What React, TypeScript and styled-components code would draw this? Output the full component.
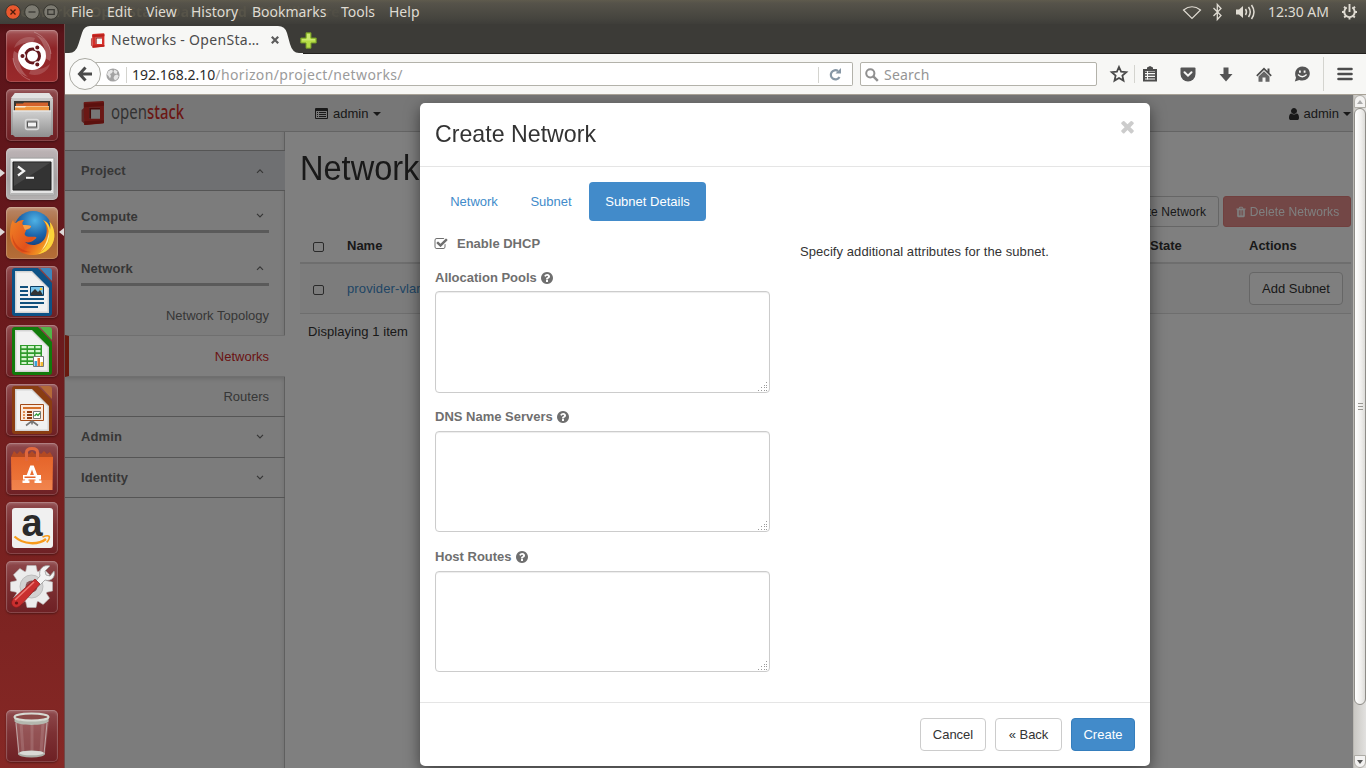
import React from "react";
import styled, { createGlobalStyle, css } from "styled-components";

const GlobalStyle = createGlobalStyle`
  * { box-sizing: border-box; }
  html, body { margin: 0; padding: 0; overflow: hidden; }
  body { font-family: "Liberation Sans", Arial, sans-serif; font-size: 13px; line-height: 18px; color: #333; }
  svg { display: block; flex: none; overflow: visible; }
`;

const uiFont = css`
  font-family: "Noto Sans", "Open Sans", sans-serif;
  font-size: 14px;
`;

/* ---------- Desktop shell ---------- */
const Desktop = styled.div`
  width: 1366px;
  height: 768px;
  display: flex;
  flex-direction: column;
  overflow: hidden;
`;
const MenuBar = styled.header`
  ${uiFont}
  position: relative;
  height: 24px;
  flex: none;
  display: flex;
  align-items: center;
  justify-content: space-between;
  padding: 0 8px 0 5px;
  color: #dfdbd2;
  background: linear-gradient(#5f5b4d 0, #56534a 3px, #45443e 19px, #3e3d39 24px);
`;
const WindowTitle = styled.span`
  position: absolute;
  left: 9px;
  top: 2px;
  font-weight: 700;
  font-size: 14px;
  line-height: 20px;
  letter-spacing: 0.1px;
  color: #575449;
  white-space: nowrap;
  mask-image: linear-gradient(90deg, #000 300px, transparent 345px);
`;
const MenuLeft = styled.div`
  position: relative;
  display: flex;
  align-items: center;
`;
const WindowButtons = styled.div`
  display: flex;
  gap: 3px;
  width: 66px;
`;
const MenuItem = styled.span<{ $w: number }>`
  width: ${(p) => p.$w}px;
  white-space: nowrap;
`;
const Indicators = styled.div`
  display: flex;
  align-items: center;
`;
const Clock = styled.span`
  margin: 0 12px 0 12px;
  white-space: nowrap;
`;
const Workspace = styled.div`
  flex: 1;
  display: flex;
  min-height: 0;
`;

/* ---------- Launcher ---------- */
const Launcher = styled.nav`
  width: 65px;
  flex: none;
  padding: 6px 0 6px 6px;
  display: flex;
  flex-direction: column;
  gap: 7px;
  border-right: 1px solid #6f4a49;
  background: linear-gradient(#4c0f13 0, #5b141a 10px, #66181c 230px, #76201f 480px, #862825 744px);
`;
const Tile = styled.div<{ $bg?: string; $last?: boolean }>`
  position: relative;
  width: 52px;
  height: 52px;
  flex: none;
  border-radius: 5px;
  margin-top: ${(p) => (p.$last ? "auto" : "0")};
  background: ${(p) => p.$bg ?? "linear-gradient(#8f4a4d, #7c3033 45%, #6e2024)"};
  box-shadow: inset 0 0 0 1px rgba(255, 255, 255, 0.17), inset 0 2px 3px rgba(255, 255, 255, 0.18), 0 1px 2px rgba(0, 0, 0, 0.35);
`;
const Pip = styled.i<{ $side: "left" | "right" }>`
  position: absolute;
  top: 21px;
  ${(p) =>
    p.$side === "left"
      ? "left: -6px; border-left: 5px solid #ded8d8;"
      : "right: -6px; border-right: 5px solid #ded8d8;"}
  border-top: 4.5px solid transparent;
  border-bottom: 4.5px solid transparent;
`;

/* ---------- Browser chrome ---------- */
const Browser = styled.section`
  flex: 1;
  display: flex;
  flex-direction: column;
  min-width: 0;
`;
const TabStrip = styled.div`
  height: 30px;
  flex: none;
  display: flex;
  align-items: flex-start;
  background: #3c3b37;
  border-bottom: 1px solid #23221f;
`;
const Tab = styled.div`
  ${uiFont}
  position: relative;
  width: 238px;
  height: 30px;
  padding: 2px 11px 0 25px;
  display: flex;
  align-items: center;
  color: #4c4c4c;
`;
const TabShape = styled.svg`
  position: absolute;
  left: 0;
  top: 0;
`;
const TabLabel = styled.span`
  position: relative;
  margin-left: 6px;
  width: 160px;
  letter-spacing: 0.3px;
  white-space: nowrap;
`;
const Above = styled.span`
  position: relative;
  display: block;
`;
const NewTab = styled.div`
  margin: 8px 0 0 -3px;
`;
const NavBar = styled.div`
  ${uiFont}
  height: 41px;
  flex: none;
  display: flex;
  align-items: center;
  padding: 0 13px 0 4px;
  background: #f7f7f5;
  border-bottom: 1px solid #a7a196;
`;
const BackButton = styled.div`
  position: relative;
  z-index: 1;
  width: 32px;
  height: 32px;
  flex: none;
  border: 1px solid #a9a9a2;
  border-radius: 50%;
  background: #fafaf9;
  display: flex;
  align-items: center;
  justify-content: center;
`;
const UrlField = styled.div`
  width: 758px;
  height: 24px;
  margin-left: -6px;
  padding: 1px 0 0 11px;
  display: flex;
  align-items: center;
  background: #fff;
  border: 1px solid #b3b2aa;
  border-left: 0;
  border-radius: 0 2px 2px 0;
  white-space: nowrap;
`;
const Divider = styled.i<{ $h: number }>`
  width: 1px;
  flex: none;
  height: ${(p) => p.$h}px;
  background: #d4d4cf;
`;
const Host = styled.span`
  margin-left: 5px;
  color: #2b2b2b;
`;
const UrlPath = styled.span`
  flex: 1;
  color: #9b9b9b;
  letter-spacing: 0.37px;
`;
const Reload = styled.div`
  width: 33px;
  display: flex;
  justify-content: center;
`;
const SearchField = styled.div`
  width: 237px;
  height: 24px;
  margin-left: 7px;
  padding: 1px 0 0 4px;
  display: flex;
  align-items: center;
  gap: 5px;
  color: #959595;
  background: #fff;
  border: 1px solid #b3b2aa;
  border-radius: 2px;
  letter-spacing: 0.2px;
`;
const ToolButtons = styled.div`
  flex: 1;
  display: flex;
  align-items: center;
  padding-left: 13px;
`;

/* ---------- Web page ---------- */
const PageFrame = styled.div`
  flex: 1;
  display: flex;
  min-height: 0;
`;
const Viewport = styled.div`
  position: relative;
  width: 1288px;
  overflow: hidden;
  background: #fff;
`;
const ScrollBar = styled.div`
  width: 13px;
  display: flex;
  flex-direction: column;
  background: linear-gradient(90deg, #c9c7c3, #e2e1df);
  border-left: 1px solid #b9b7b2;
`;
const ScrollEnd = styled.div<{ $down?: boolean }>`
  height: 13px;
  display: flex;
  align-items: center;
  justify-content: center;
  background: #f3f2f1;
  border: 1px solid #aeaca6;
  border-radius: ${(p) => (p.$down ? "0 0 6px 6px" : "6px 6px 0 0")};
`;
const Thumb = styled.div`
  height: 597px;
  margin-bottom: auto;
  display: flex;
  flex-direction: column;
  align-items: center;
  justify-content: center;
  gap: 2px;
  border: 1px solid #8e8c87;
  border-radius: 6px;
  background: linear-gradient(90deg, #fff, #f0efed 60%, #dddcd9);
`;
const Grip = styled.i`
  width: 5px;
  height: 1px;
  background: #9a9893;
`;
const TopBar = styled.div`
  height: 37px;
  display: flex;
  align-items: center;
  justify-content: space-between;
  padding: 0 2px 0 14px;
  background: #efefef;
  border-bottom: 1px solid #c8c8c8;
`;
const Brand = styled.div`
  display: flex;
  align-items: center;
  gap: 128px;
`;
const Picker = styled.div<{ $gap: number }>`
  display: flex;
  align-items: center;
  padding-top: 1px;
  gap: ${(p) => p.$gap}px;
`;
const Caret = styled.i`
  border: 4px solid transparent;
  border-top: 4px solid #333;
  border-bottom: 0;
`;
const PageBody = styled.div`
  display: flex;
  height: 636px;
`;
const Sidebar = styled.aside`
  width: 220px;
  flex: none;
  padding-top: 18px;
  background: #f9f9f9;
  background-image: linear-gradient(270deg, rgba(0, 0, 0, 0.07), transparent 5px);
  box-shadow: inset -1px 0 0 #bfbfbf;
`;
const PanelGroup = styled.div<{ $active?: boolean }>`
  height: 41px;
  padding: 0 21px 0 16px;
  display: flex;
  align-items: center;
  justify-content: space-between;
  font-weight: 700;
  color: #6e6e6e;
  letter-spacing: 0.1px;
  ${(p) =>
    p.$active
      ? "background: #dfe1e4; border-top: 1px solid #aaa; border-bottom: 1px solid #aaa;"
      : "border-bottom: 1px solid #aaa;"}
`;
const SubGroup = styled.div<{ $top: number; $pad: number }>`
  margin: ${(p) => p.$top}px 16px 0;
  padding: 0 5px ${(p) => p.$pad}px 0;
  display: flex;
  justify-content: space-between;
  align-items: center;
  border-bottom: 3px solid #b4b4b4;
  font-weight: 700;
  color: #6e6e6e;
  letter-spacing: 0.08px;
  svg { margin-top: -2px; }
`;
const SideLink = styled.div<{ $h: number; $active?: boolean }>`
  height: ${(p) => p.$h}px;
  padding-right: 16px;
  display: flex;
  align-items: center;
  justify-content: flex-end;
  color: #6e6e6e;
  ${(p) =>
    p.$active &&
    css`
      padding-top: 2px;
      color: #d42a2a;
      background: #fff;
      border-left: 4px solid #d3321f;
      border-top: 1px solid #dedede;
      border-bottom: 1px solid #dedede;
      box-shadow: 0 2px 5px -1px rgba(0, 0, 0, 0.2);
      clip-path: inset(0 0 -7px 0);
    `}
`;
const Main = styled.main`
  flex: 1;
  padding: 15px 2px 0 15px;
`;
const PageTitle = styled.h1`
  margin: 0;
  font-size: 35px;
  line-height: 42px;
  font-weight: 400;
  transform: scaleX(0.93);
  transform-origin: 0 0;
`;
const TableActions = styled.div`
  height: 31px;
  margin-top: 7px;
  display: flex;
  justify-content: flex-end;
  gap: 4px;
`;
const Button = styled.div<{ $kind?: "primary" | "danger"; $small?: boolean; $w?: number }>`
  height: ${(p) => (p.$small ? 31 : 33)}px;
  width: ${(p) => (p.$w ? p.$w + "px" : "auto")};
  padding: ${(p) => (p.$w ? "0" : "0 12px")};
  display: inline-flex;
  align-items: center;
  justify-content: center;
  gap: 3px;
  font-size: ${(p) => (p.$small ? 12 : 13)}px;
  letter-spacing: ${(p) => (p.$small ? 0.1 : 0)}px;
  border-radius: ${(p) => (p.$small ? 3 : 4)}px;
  white-space: nowrap;
  ${(p) =>
    p.$kind === "primary"
      ? "color: #fff; background: #428bca; border: 1px solid #357ebd;"
      : p.$kind === "danger"
        ? "color: #fff; background: #d9534f; border: 1px solid #d43f3a; opacity: 0.65;"
        : "color: #333; background: #fff; border: 1px solid #ccc;"}
`;
const Row = styled.div<{ $head?: boolean }>`
  display: grid;
  grid-template-columns: 39px 763px 139px 1fr;
  align-items: center;
  padding: ${(p) => (p.$head ? "2px" : "0")} 0 0 8px;
  height: ${(p) => (p.$head ? 37 : 50)}px;
  font-weight: ${(p) => (p.$head ? 700 : 400)};
  border-bottom: ${(p) => (p.$head ? "2px" : "1px")} solid #ddd;
  background: ${(p) => (p.$head ? "#fff" : "#f9f9f9")};
`;
const RightCell = styled.span`
  padding-left: 40px;
`;
const Check = styled.i`
  width: 11px;
  height: 10px;
  margin: 2px 0 0 5px;
  border: 1px solid #555;
  border-radius: 2px;
`;
const Link = styled.span`
  color: #428bca;
  letter-spacing: 0.12px;
`;
const TableCount = styled.div`
  padding: 9px 8px;
  letter-spacing: 0.06px;
`;

/* ---------- Modal ---------- */
const Backdrop = styled.div`
  position: absolute;
  inset: 0;
  padding: 8px 0 0 355px;
  background: rgba(0, 0, 0, 0.5);
`;
const Dialog = styled.div`
  width: 730px;
  height: 663px;
  display: flex;
  flex-direction: column;
  background: #fff;
  background-clip: padding-box;
  border-radius: 5px;
  box-shadow: 0 5px 15px rgba(0, 0, 0, 0.5);
`;
const DialogHead = styled.div`
  height: 64px;
  padding: 14px 13px 0 15px;
  display: flex;
  justify-content: space-between;
  border-bottom: 1px solid #e5e5e5;
`;
const DialogTitle = styled.h3`
  margin: 1px 0 0;
  font-size: 24px;
  line-height: 32px;
  font-weight: 400;
  transform: scaleX(0.966);
  transform-origin: 0 0;
`;
const DialogBody = styled.div`
  flex: 1;
  padding: 15px;
`;
const Tabs = styled.div`
  display: flex;
  gap: 2px;
`;
const Pill = styled.div<{ $active?: boolean; $w: number }>`
  width: ${(p) => p.$w}px;
  height: 39px;
  display: flex;
  align-items: center;
  justify-content: center;
  border-radius: 4px;
  color: ${(p) => (p.$active ? "#fff" : "#428bca")};
  background: ${(p) => (p.$active ? "#428bca" : "transparent")};
`;
const Columns = styled.div`
  display: flex;
  gap: 30px;
`;
const Form = styled.div`
  width: 335px;
  padding-top: 14px;
`;
const CheckLabel = styled.div`
  display: flex;
  align-items: center;
  gap: 9px;
  margin-left: -1px;
  font-weight: 700;
  color: #6f6f6f;
`;
const Field = styled.div<{ $top: number }>`
  margin-top: ${(p) => p.$top}px;
`;
const FieldLabel = styled.div`
  display: flex;
  align-items: center;
  gap: 3px;
  font-weight: 700;
  color: #6f6f6f;
`;
const TextBox = styled.div<{ $h: number; $gap?: number }>`
  height: ${(p) => p.$h}px;
  margin-top: ${(p) => p.$gap ?? 5}px;
  display: flex;
  align-items: flex-end;
  justify-content: flex-end;
  border: 1px solid #ccc;
  border-radius: 4px;
  box-shadow: inset 0 1px 1px rgba(0, 0, 0, 0.075);
`;
const Help = styled.p`
  margin: 22px 0 0;
  letter-spacing: 0.07px;
`;
const DialogFoot = styled.div`
  height: 64px;
  padding: 15px;
  display: flex;
  justify-content: flex-end;
  gap: 9px;
  border-top: 1px solid #e5e5e5;
`;

/* ---------- Glyphs ---------- */
const glyphs = {
  times:
    "M1490 1322q0 40-28 68l-136 136q-28 28-68 28t-68-28l-294-294-294 294q-28 28-68 28t-68-28l-136-136q-28-28-28-68t28-68l294-294-294-294q-28-28-28-68t28-68l136-136q28-28 68-28t68 28l294 294 294-294q28-28 68-28t68 28l136 136q28 28 28 68t-28 68l-294 294 294 294q28 28 28 68z",
  question:
    "M1024 1376v-192q0-14-9-23t-23-9h-192q-14 0-23 9t-9 23v192q0 14 9 23t23 9h192q14 0 23-9t9-23zm256-672q0-88-55.5-163t-138.5-116-170-41q-243 0-371 213-15 24 8 42l132 100q7 6 19 6 16 0 25-12 53-68 86-92 34-24 86-24 48 0 85.5 26t37.5 59q0 38-20 61t-68 45q-63 28-115.5 86.5t-52.5 125.5v36q0 14 9 23t23 9h192q14 0 23-9t9-23q0-19 21.5-49.5t54.5-49.5q32-18 49-28.5t46-35 44.5-48 28-60.5 12.5-81zm384 192q0 209-103 385.5t-279.5 279.5-385.5 103-385.5-103-279.5-279.5-103-385.5 103-385.5 279.5-279.5 385.5-103 385.5 103 279.5 279.5 103 385.5z",
  user: "M1536 1399q0 109-62.5 187t-150.5 78h-854q-88 0-150.5-78t-62.5-187q0-85 8.5-160.5t31.5-152 58.5-131 94-89 134.5-34.5q131 128 313 128t313-128q76 0 134.5 34.5t94 89 58.5 131 31.5 152 8.5 160.5zm-256-887q0 159-112.5 271.5t-271.5 112.5-271.5-112.5-112.5-271.5 112.5-271.5 271.5-112.5 271.5 112.5 112.5 271.5z",
  trash:
    "M704 1376v-704q0-14-9-23t-23-9h-64q-14 0-23 9t-9 23v704q0 14 9 23t23 9h64q14 0 23-9t9-23zm256 0v-704q0-14-9-23t-23-9h-64q-14 0-23 9t-9 23v704q0 14 9 23t23 9h64q14 0 23-9t9-23zm256 0v-704q0-14-9-23t-23-9h-64q-14 0-23 9t-9 23v704q0 14 9 23t23 9h64q14 0 23-9t9-23zm-544-992h448l-48-117q-7-9-17-11h-317q-10 2-17 11zm928 32v64q0 14-9 23t-23 9h-96v948q0 83-47 143.5t-113 60.5h-832q-66 0-113-58.500t-47-141.500v-952h-96q-14 0-23-9t-9-23v-64q0-14 9-23t23-9h309l70-167q15-37 54-63t79-26h320q40 0 79 26t54 63l70 167h309q14 0 23 9t9 23z",
  check:
    "M1472 930v318q0 119-84.5 203.5t-203.5 84.5h-832q-119 0-203.5-84.5t-84.5-203.5v-832q0-119 84.5-203.5t203.5-84.5h832q63 0 117 25 15 7 18 23 3 17-9 29l-49 49q-10 10-23 10-3 0-9-2-23-6-45-6h-832q-66 0-113 47t-47 113v832q0 66 47 113t113 47h832q66 0 113-47t47-113v-254q0-13 9-22l64-64q10-10 23-10 6 0 12 3 20 8 20 29zm231-489l-814 814q-24 24-57 24t-57-24l-430-430q-24-24-24-57t24-57l110-110q24-24 57-24t57 24l263 263 647-647q24-24 57-24t57 24l110 110q24 24 24 57t-24 57z",
};
const Glyph = ({ name, size, color }: { name: keyof typeof glyphs; size: number; color: string }) => (
  <svg width={size} height={size} viewBox="0 0 1792 1792" fill={color}>
    <path d={glyphs[name]} />
  </svg>
);
const Chevron = ({ up }: { up?: boolean }) => (
  <svg width="8" height="6" viewBox="0 0 8 6" fill="none" stroke="#6e6e6e" strokeWidth="1.2">
    <path d={up ? "M1 4.8 4 1.8 7 4.8" : "M1 .8 4 3.8 7 .8"} />
  </svg>
);
const ListIcon = () => (
  <svg width="13" height="11" viewBox="0 0 13 11">
    <path d="M1 0h11a1 1 0 0 1 1 1v9a1 1 0 0 1-1 1H1a1 1 0 0 1-1-1V1a1 1 0 0 1 1-1zm0 3v7h11V3z" fill="#333" fillRule="evenodd" />
    <path d="M2 4h1v1H2zm0 2h1v1H2zm0 2h1v1H2zM4 4h7v1H4zm0 2h7v1H4zm0 2h7v1H4z" fill="#333" />
  </svg>
);
const StackMark = ({ size }: { size: number }) => (
  <svg width={size} height={size} viewBox="0 0 24 24">
    <path d="M1.500 9l2.500-2v15l-2.500-2z" fill="#a8201b" opacity=".75" />
    <path d="M3.500 2.500q0-1 1-1L22 .5q1 0 1 1v19.500q0 1-1 1L5 23.500q-1 0-1-1zM8.800 7v10.500h10.400V7z" fill="#d6302a" fillRule="evenodd" />
    <path d="M3.800 3L23 2v3L4 6.500zM4 20l19-1v2.500L4 23.500z" fill="#b8221d" />
    <path d="M8.800 7h10.400v1.600H10.600v8.900H8.800z" fill="#8e1713" />
  </svg>
);
const GripDots = () => (
  <svg width="11" height="10" viewBox="0 0 11 10" fill="#999">
    <path d="M8 0h1v1H8zM6 3h1v1H6zM8 3h1v1H8zM3 5h1v1H3zM6 5h1v1H6zM8 5h1v1H8zM0 8h1v1H0zM3 8h1v1H3zM6 8h1v1H6zM8 8h1v1H8z" />
  </svg>
);
const WindowButton = ({ kind }: { kind: "close" | "min" | "max" }) => (
  <svg width="16" height="16" viewBox="0 0 16 16">
    <circle cx="8" cy="8" r="7.300" fill={kind === "close" ? "#e9582e" : "#7c7a71"} stroke="#37362f" strokeWidth="1" />
    <g fill="none" stroke={kind === "close" ? "#4a1c0c" : "#3a3934"} strokeWidth="1.300">
      {kind === "close" && <path d="M5.500 5.500l5 5m0-5l-5 5" />}
      {kind === "min" && <path d="M4.500 8h7" />}
      {kind === "max" && <path d="M4.800 5.700h6.400v4.600H4.800z" />}
    </g>
  </svg>
);

/* ---------- Launcher artwork ---------- */
const Art = ({ children }: { children: React.ReactNode }) => (
  <svg width="52" height="52" viewBox="0 0 52 52">
    {children}
  </svg>
);
const UbuntuArt = () => (
  <Art>
    <path d="M30 5c9 3 15 10 15 20q0 3-1 6l-5-3c1-10-3-18-9-23zM22 47C13 44 7 37 7 27q0-3 1-6l5 3c-1 10 3 18 9 23z" fill="#fff" opacity=".22" />
    <path d="M8 18C11 9 20 5 29 8l-2 5c-7-1-13 0-19 5zM44 34c-3 9-12 13-21 10l2-5c7 1 13 0 19-5z" fill="#fff" opacity=".16" />
    <path d="M28 2c10 4 16 12 17 22M24 50C14 46 8 38 7 28" fill="none" stroke="#fff" strokeOpacity=".25" />
    <circle cx="26" cy="26" r="14" fill="#fff" />
    <circle cx="26.500" cy="26" r="7" fill="none" stroke="#64171c" strokeWidth="3" />
    <g stroke="#fff" strokeWidth="1.300" fill="#64171c">
      <circle cx="16.500" cy="26" r="2.700" />
      <circle cx="31.300" cy="17.500" r="2.700" />
      <circle cx="31.300" cy="34.500" r="2.700" />
    </g>
  </Art>
);
const FilesArt = () => (
  <Art>
    <defs>
      <linearGradient id="cab" x2="0" y2="1">
        <stop offset="0" stopColor="#d2d2d2" />
        <stop offset="1" stopColor="#8f8f8f" />
      </linearGradient>
    </defs>
    <path d="M9 4h34l4 6v36H5V10z" fill="url(#cab)" />
    <path d="M9 4h34l4 5H5z" fill="#e2e2e2" />
    <path d="M8 12h36v12H8z" fill="#3a3733" />
    <path d="M10 14.500h7l1-1h24V22H10z" fill="#d4622c" />
    <path d="M9 17h34v6H9z" fill="#f4ecdd" />
    <path d="M9 18.500h10l1-1h23v5H9z" fill="#f0953c" />
    <path d="M7 21.500h38v24.500l-2 2H9l-2-2z" fill="url(#cab)" />
    <path d="M7 21.500h38v1H7z" fill="#eee" />
    <rect x="19.500" y="30.500" width="13" height="10" rx="2" fill="#a8a8a8" stroke="#dcdcdc" strokeWidth="1.500" />
    <rect x="21.500" y="33" width="9" height="5" fill="#f3f3f3" stroke="#555" />
  </Art>
);
const TerminalArt = () => (
  <Art>
    <path d="M4 10h44v37H4z" fill="#e4e4e4" stroke="#a3a3a3" />
    <path d="M5 11h42v1.500H5z" fill="#fff" />
    <path d="M7 14h38v28H7z" fill="#333" stroke="#1d1d1d" />
    <path d="M8 14.500h36.500L8 38z" fill="#464646" />
    <path d="M12 18.500l6 4.500-6 4.500" fill="none" stroke="#f4f4f4" strokeWidth="2.200" />
    <path d="M20 28.800h8v2h-8z" fill="#f4f4f4" />
    <path d="M5 45h42v2H5z" fill="#b5b5b5" />
  </Art>
);
const FirefoxArt = () => (
  <Art>
    <defs>
      <radialGradient id="globe" cx=".55" cy=".25" r=".8">
        <stop offset="0" stopColor="#4fb2e5" />
        <stop offset=".5" stopColor="#1d65ab" />
        <stop offset="1" stopColor="#122e69" />
      </radialGradient>
      <linearGradient id="fox" x2="1" y2=".6">
        <stop offset="0" stopColor="#f08325" />
        <stop offset=".6" stopColor="#e2511b" />
        <stop offset="1" stopColor="#f9b025" />
      </linearGradient>
    </defs>
    <circle cx="27" cy="23" r="19" fill="url(#globe)" />
    <path d="M7 13c1 3 2 3 3 3 3-3 6-3 8-3-2 2-2 4-1 5 2 0 5 0 8 1 0 2-2 3-5 4 0 2-2 3-1 5 2 3 8 1 11 2 1 0 0 2-2 3-2 2-6 3-9 2 5 5 16 4 20-4 3-6 2-13-2-18 7 3 7 8 7 10 1-3 0-8-1-9 5 5 6 13 5 18-2 11-12 16-21 16C14 48 4 40 4 27c0-6 1-11 3-14z" fill="url(#fox)" />
    <path d="M37 13c5 2 7 7 7 10 1-3 0-8-1-9 5 5 6 13 5 18-2 9-9 14-16 15 7-4 11-10 11-18 0-7-2-12-6-16z" fill="#fbd43a" />
    <path d="M43 24c1 8-2 15-8 20 5-7 7-13 8-20z" fill="#fff2a0" />
    <path d="M17 18c3 0 6 0 8 1 0 2-3 3-6 4-1-2-2-4-2-5z" fill="#f3a04a" />
    <path d="M6 27c2 11 9 17 19 18C14 47 6 40 6 27z" fill="#c93a14" opacity=".6" />
  </Art>
);
const DocArt = ({ dark, light, children }: { dark: string; light: string; children: React.ReactNode }) => (
  <Art>
    <path d="M9 2h23l14 15v30q0 3-3 3H9q-3 0-3-3V5q0-3 3-3z" fill={dark} />
    <path d="M34 2h9q3 0 3 3v10z" fill={light} />
    <path d="M9 5h17l17 17v25H9z" fill="#d4d4d4" />
    <path d="M10.500 6.500H25.500l16 16V45.500H10.500z" fill="#f1f1f1" />
    {children}
  </Art>
);
const WriterArt = () => (
  <DocArt dark="#0d5286" light="#3f86bb">
    <path d="M14 20h8v2h-8zm0 4h8v2h-8zm0 4h8v2h-8zm0 4h24v2H14zm0 4h24v2H14zm0 4h18v2H14z" fill="#11507c" />
    <path d="M24.500 20.500h13v9h-13z" fill="#79c4ea" stroke="#0c3f66" />
    <path d="M25 29v-2l4-4 3 3 2-2 3 5z" fill="#333" />
    <circle cx="35" cy="23" r="1.300" fill="#f6c62d" />
  </DocArt>
);
const CalcArt = () => (
  <DocArt dark="#127a0b" light="#52b548">
    <path d="M14 20h22v20H14z" fill="#2f9a2c" />
    <path d="M15.500 21h5v2.200h-5zm6.500 0h6v2.200h-6zm7.500 0h5v2.200h-5zm-14 4h5v2.200h-5zm6.500 0h6v2.200h-6zm7.500 0h5v2.200h-5zm-14 4h5v2.200h-5zm6.500 0h6v2.200h-6zm7.500 0h5v2.200h-5zm-14 4h5v2.200h-5zm6.500 0h6v2.200h-6zm-6.500 4h5v2h-5zm6.500 0h6v2h-6z" fill="#d4f5cd" />
    <path d="M27.500 31.500h10v10h-10z" fill="#fff" stroke="#777" />
    <path d="M28.500 36h2.500v5h-2.500z" fill="#3aa3d9" />
    <path d="M31.500 33H34v8h-2.500z" fill="#e5702a" />
    <path d="M34.500 37H37v4h-2.500z" fill="#f1bb34" />
  </DocArt>
);
const ImpressArt = () => (
  <DocArt dark="#8a3d12" light="#b56a38">
    <path d="M14.500 20.500h23v16h-23z" fill="#fbe9dc" stroke="#a34a17" />
    <path d="M17 23h18v2H17z" fill="#d4702b" />
    <path d="M17 27h2v2h-2zm0 3h2v2h-2zm0 3h2v2h-2z" fill="#e08c50" />
    <path d="M21 27h5v2h-5zm0 3h5v2h-5zm0 3h5v2h-5z" fill="#8e3b10" />
    <path d="M27.500 27.500h7v7h-7z" fill="#fff" stroke="#777" />
    <path d="M28.500 32l2-2 1.500 1.500 2-2.500" fill="none" stroke="#2e9b3a" strokeWidth="1.300" />
    <path d="M26 37l-6 4.500m6-4.500l6 4.500m-6-4.500v3.500" stroke="#777" strokeWidth="1.600" />
  </DocArt>
);
const SoftwareArt = () => (
  <Art>
    <defs>
      <linearGradient id="bag" x2="0" y2="1">
        <stop offset="0" stopColor="#e5652b" />
        <stop offset="1" stopColor="#f07a3e" />
      </linearGradient>
    </defs>
    <path d="M8 8l3 3 3-3 3 3 3-3 3 3 3-3 3 3 3-3 3 3 3-3 3 3 3-2 3 5H5z" fill="#b44a22" />
    <path d="M5 14h42l-.5 33h-41z" fill="url(#bag)" />
    <path d="M20.500 18V9.500q0-4 5.500-4t5.500 4V18" fill="none" stroke="#e0683e" strokeWidth="3" />
    <path d="M24.300 22.500h3.400l5.600 15h2.200V40h-7v-2.500h1.300L26 26.500l-3.800 11h1.300V40h-7v-2.500h2.200z" fill="#fff" />
    <path d="M17 32h18v4.500H17z" fill="#fff" />
    <path d="M18.500 33.500h11v1.500h-11z" fill="#e5652b" />
    <path d="M5.500 37h41v10h-41z" fill="#fff" opacity=".08" />
  </Art>
);
const AmazonArt = () => (
  <Art>
    <rect x="6" y="6" width="41" height="40" rx="3" fill="#f0f0f0" />
    <text x="26" y="33.500" textAnchor="middle" fontFamily="Liberation Sans, Arial, sans-serif" fontWeight="700" fontSize="38" fill="#2a2a2a">
      a
    </text>
    <path d="M8.500 34.500c9 8.500 24 8.500 31.500 2.500" fill="none" stroke="#f79b1c" strokeWidth="2.300" />
    <path d="M36.500 35c3-1.200 6-1.400 6.700-.6s-.5 4-2.500 6" fill="none" stroke="#f79b1c" strokeWidth="1.700" />
  </Art>
);
const SettingsArt = () => (
  <Art>
    <g transform="translate(25.500 25.500)">
      <g fill="#ececec" stroke="#b5b5b5" strokeWidth=".6">
        {[0, 45, 90, 135].map((a) => (
          <path key={a} transform={`rotate(${a})`} d="M-4.500-21h9l1.500 7v28l-1.500 7h-9L-6 14v-28z" />
        ))}
      </g>
      <circle r="16" fill="#ececec" />
      <circle r="11.500" fill="#d2d2d2" stroke="#bdbdbd" />
      <circle r="6" fill="#8a5458" />
    </g>
    <path d="M44 5l-5 5 1 4 4 1 4-5c2 6-3 11-9 9l-8 8-4-4 7-8C32 8 38 3 44 5z" fill="#f3f3f3" stroke="#999" strokeWidth=".8" />
    <path d="M29 18l5 5-19 21c-3 3-6 3-8 1s-2-5 1-8z" fill="#c92f2f" stroke="#8c1818" strokeWidth=".7" />
    <path d="M28 21L9 39" stroke="#ee7a74" strokeWidth="1.500" />
    <circle cx="10.500" cy="42" r="1.600" fill="#691313" />
  </Art>
);
const TrashArt = () => (
  <Art>
    <path d="M9 10h34l-4 34q-13 5-27 0z" fill="#c9a3a3" opacity=".3" />
    <path d="M15 13l2 29M26 14v29M37 13l-2 29" stroke="#fff" strokeOpacity=".13" strokeWidth="3" />
    <ellipse cx="25.500" cy="44" rx="13.500" ry="3.500" fill="#a9aba4" />
    <ellipse cx="25.500" cy="43" rx="12" ry="2.300" fill="#dadad6" />
    <path d="M10 13l3 31M41 13l-3 31" stroke="#ddd" strokeOpacity=".6" />
    <path d="M8.500 8v3.500c3 4.500 31 4.500 34 0V8c-3 4-31 4-34 0z" fill="#b4b8af" />
    <ellipse cx="25.500" cy="7" rx="17" ry="3.500" fill="#8a4a48" stroke="#d7dad3" strokeWidth="2" />
  </Art>
);

const terminalBg = "linear-gradient(#bdb4b6, #a5a0a1 60%, #b3b0b0)";
const ubuntuBg = "linear-gradient(#a25557, #8e2427 35%, #9a2a2b)";
const firefoxBg = "linear-gradient(#b98768, #a8622f 50%, #b56e38)";

export default function App() {
  return (
    <Desktop>
      <GlobalStyle />
      <MenuBar>
        <WindowTitle aria-hidden>Networks - OpenStack Dashboard - Mozilla Firefox</WindowTitle>
        <MenuLeft>
          <WindowButtons>
            <WindowButton kind="close" />
            <WindowButton kind="min" />
            <WindowButton kind="max" />
          </WindowButtons>
          <MenuItem $w={36}>File</MenuItem>
          <MenuItem $w={39}>Edit</MenuItem>
          <MenuItem $w={45}>View</MenuItem>
          <MenuItem $w={61}>History</MenuItem>
          <MenuItem $w={89}>Bookmarks</MenuItem>
          <MenuItem $w={48}>Tools</MenuItem>
          <MenuItem $w={40}>Help</MenuItem>
        </MenuLeft>
        <Indicators>
          <svg width="20" height="16" viewBox="0 0 20 16" fill="none" stroke="#dfdbd2" strokeWidth="1.200">
            <path d="M1.500 6q8.500-6.500 17 0L10 14.500z" />
          </svg>
          <svg width="11" height="18" viewBox="0 0 11 18" fill="none" stroke="#dfdbd2" strokeWidth="1.300" style={{ marginLeft: 10 }}>
            <path d="M1.500 5l7.500 7.500L5.300 16.500V1.500L9 5.500 1.500 13" />
          </svg>
          <svg width="21" height="18" viewBox="0 0 21 18" style={{ marginLeft: 12 }}>
            <path d="M1 6.500h3l4-3.500v12l-4-3.500H1z" fill="#dfdbd2" />
            <path d="M10.500 6q2 3 0 6M13.500 4q3.500 5 0 10M16.500 2q5 7 0 14" fill="none" stroke="#dfdbd2" strokeWidth="1.500" />
          </svg>
          <Clock>12:30 AM</Clock>
          <svg width="17" height="18" viewBox="0 0 17 18" fill="none" stroke="#dfdbd2">
            <path d="M5.700 4.500A5.200 5.200 0 1 0 11.300 4.500" strokeWidth="1.900" />
            <path d="M8.500 1v8" strokeWidth="1.900" />
            <path d="M1 9h2.500M13.500 9H16M3 3.700L5 5.500M14 3.700L12 5.500M3.200 14.500L5 12.700M13.800 14.500L12 12.700M8.500 14v2.500" strokeWidth="1.900" />
          </svg>
        </Indicators>
      </MenuBar>

      <Workspace>
        <Launcher>
          <Tile $bg={ubuntuBg}><UbuntuArt /></Tile>
          <Tile><FilesArt /></Tile>
          <Tile $bg={terminalBg}><TerminalArt /><Pip $side="left" /></Tile>
          <Tile $bg={firefoxBg}><FirefoxArt /><Pip $side="left" /><Pip $side="right" /></Tile>
          <Tile><WriterArt /></Tile>
          <Tile><CalcArt /></Tile>
          <Tile><ImpressArt /></Tile>
          <Tile><SoftwareArt /></Tile>
          <Tile><AmazonArt /></Tile>
          <Tile><SettingsArt /></Tile>
          <Tile $last><TrashArt /></Tile>
        </Launcher>

        <Browser>
          <TabStrip>
            <Tab>
              <TabShape width="238" height="30" viewBox="0 0 238 30">
                <path d="M0 30v-1h4q7 0 9.500-9L17 9q2-7 8-7h188q7 0 9 7l3 11q2.500 9 9 9h4v1z" fill="#f7f7f5" />
              </TabShape>
              <Above><StackMark size={15} /></Above>
              <TabLabel>Networks - OpenSta…</TabLabel>
              <Above>
                <svg width="8" height="8" viewBox="0 0 8 8" stroke="#5c5c5c" strokeWidth="2.200">
                  <path d="M.8.8l6.400 6.400m0-6.400L.8 7.200" />
                </svg>
              </Above>
            </Tab>
            <NewTab>
              <svg width="17" height="17" viewBox="0 0 17 17">
                <path d="M6 .8h5v5.200h5.200v5H11v5.200H6V11H.8V6H6z" fill="#b5dc45" stroke="#6f9427" />
                <path d="M7 2h3v5h5v1.500H2V7h5z" fill="#cbe86f" />
              </svg>
            </NewTab>
          </TabStrip>

          <NavBar>
            <BackButton>
              <svg width="16" height="16" viewBox="0 0 16 16" fill="none" stroke="#4a4a4a" strokeWidth="3">
                <path d="M8.500 1.500L2.500 8l6 6.500M3 8h12" />
              </svg>
            </BackButton>
            <UrlField>
              <svg width="14" height="14" viewBox="0 0 14 14">
                <circle cx="7" cy="7" r="6.600" fill="#a3a3a3" />
                <path d="M2 3.500l3-1.700 2 1L6 5l-2 1 1 2-1 2.500L2.500 8 1 6.500zM8.500 1.500l3 2-1 2.500-2-.5-1-2zM8.500 7.500l2.500-1 1.800 1.500-1.500 3L9 12.500 7.500 10z" fill="#e6e6e6" />
              </svg>
              <Divider $h={16} style={{ marginLeft: 6 }} />
              <Host>192.168.2.10</Host>
              <UrlPath>/horizon/project/networks/</UrlPath>
              <Divider $h={16} />
              <Reload>
                <svg width="13" height="13" viewBox="0 0 13 13">
                  <path d="M10.500 9A4.600 4.600 0 1 1 9 3" fill="none" stroke="#8797a5" strokeWidth="2.200" />
                  <path d="M6.500 5.500H12V0z" fill="#8797a5" />
                </svg>
              </Reload>
            </UrlField>
            <SearchField>
              <svg width="14" height="14" viewBox="0 0 14 14" fill="none" stroke="#909090">
                <circle cx="5.300" cy="5.300" r="4.100" strokeWidth="2" />
                <path d="M8.300 8.300l4.500 4.500" strokeWidth="2.500" />
              </svg>
              Search
            </SearchField>
            <ToolButtons>
              <svg width="18" height="18" viewBox="0 0 18 18" fill="none" stroke="#4a4a4a" strokeWidth="1.800">
                <path d="M9 2l2.100 4.700 5.200.5-3.900 3.400 1.100 5L9 13l-4.500 2.600 1.100-5L1.700 7.200l5.200-.5z" />
              </svg>
              <Divider $h={18} style={{ marginLeft: 6 }} />
              <svg width="14" height="16" viewBox="0 0 14 16" style={{ marginLeft: 8 }}>
                <path d="M4 3V1.500L7 0l3 1.500V3h4v12.500H0V3z" fill="#4c4c4c" />
                <path d="M2 5h10v8.500H2z" fill="#f7f7f5" />
                <path d="M2 5.500h10v1.400H2zm0 2.800h10v1.400H2zm0 2.800h10v1.400H2z" fill="#4c4c4c" />
                <path d="M4 5h1v8.500H4z" fill="#f7f7f5" />
              </svg>
              <svg width="16" height="15" viewBox="0 0 16 15" style={{ marginLeft: 23 }}>
                <path d="M1.500.5h13q1 0 1 1V7a7.500 7.500 0 0 1-15 0V1.500q0-1 1-1z" fill="#555" />
                <path d="M4.500 5.300L8 8.700l3.500-3.400" fill="none" stroke="#f7f7f5" strokeWidth="2" strokeLinecap="round" />
              </svg>
              <svg width="14" height="15" viewBox="0 0 14 15" style={{ marginLeft: 23 }}>
                <path d="M4.500.5h5V7H13.500L7 14.500.5 7h4z" fill="#555" />
              </svg>
              <svg width="16" height="15" viewBox="0 0 16 15" style={{ marginLeft: 23 }}>
                <path d="M8 .5L11.500 4V1.500h2V6l2.300 2.300-1.200 1.200L8 3 1.400 9.500.2 8.300z" fill="#4c4c4c" />
                <path d="M8 4.300l5.500 5.300v5.200H9.500V10.500h-3v4.300h-4V9.600z" fill="#666" />
              </svg>
              <svg width="16" height="16" viewBox="0 0 16 16" style={{ marginLeft: 22 }}>
                <path d="M8.300.6C12.800.6 15.800 3.800 15.800 7.500S12.500 14.500 8.300 14.500c-1.200 0-2-.2-3-.6L.8 15.500l1.200-3.700C-.6 6 3 .6 8.300.6z" fill="#555" />
                <path d="M5 4.500h1.800v2.300H5zm4.700 0h1.800v2.300H9.700z" fill="#f7f7f5" />
                <path d="M4 8.500q4.300 4.500 8.600 0" fill="none" stroke="#f7f7f5" strokeWidth="1.300" />
              </svg>
              <Divider $h={34} style={{ marginLeft: 13 }} />
              <svg width="16" height="14" viewBox="0 0 16 14" stroke="#4c4c4c" strokeWidth="2.600" strokeLinecap="round" style={{ marginLeft: "auto" }}>
                <path d="M1.500 2h13M1.500 7h13M1.500 12h13" />
              </svg>
            </ToolButtons>
          </NavBar>

          <PageFrame>
            <Viewport>
              <TopBar>
                <Brand>
                  <svg width="108" height="32" viewBox="0 0 108 32">
                    <g transform="translate(1 3.500)"><StackMark size={25} /></g>
                    <text x="32" y="22" fontFamily="Noto Sans, sans-serif" fontSize="20" fill="#666" textLength="36" lengthAdjust="spacingAndGlyphs">open</text>
                    <text x="68" y="22" fontFamily="Noto Sans, sans-serif" fontSize="20" fontWeight="500" fill="#d6302a" textLength="37" lengthAdjust="spacingAndGlyphs">stack</text>
                  </svg>
                  <Picker $gap={5}>
                    <ListIcon />
                    <span>admin</span>
                    <Caret />
                  </Picker>
                </Brand>
                <Picker $gap={3}>
                  <Glyph name="user" size={14} color="#333" />
                  <span>admin</span>
                  <Caret style={{ marginLeft: 1 }} />
                </Picker>
              </TopBar>
              <PageBody>
                <Sidebar>
                  <PanelGroup $active>Project<Chevron up /></PanelGroup>
                  <SubGroup $top={17} $pad={4}>Compute<Chevron /></SubGroup>
                  <SubGroup $top={27} $pad={5}>Network<Chevron up /></SubGroup>
                  <SideLink $h={49} style={{ paddingTop: 11 }}>Network Topology</SideLink>
                  <SideLink $h={42} $active>Networks</SideLink>
                  <SideLink $h={39}>Routers</SideLink>
                  <PanelGroup style={{ borderTop: "1px solid #aaa", height: 42 }}>Admin<Chevron /></PanelGroup>
                  <PanelGroup style={{ height: 40 }}>Identity<Chevron /></PanelGroup>
                </Sidebar>
                <Main>
                  <PageTitle>Networks</PageTitle>
                  <TableActions>
                    <Button $small>
                      <svg width="10" height="10" viewBox="0 0 10 10" fill="#333">
                        <path d="M4 0h2v4h4v2H6v4H4V6H0V4h4z" />
                      </svg>
                      Create Network
                    </Button>
                    <Button $small $kind="danger" $w={128}>
                      <Glyph name="trash" size={12} color="#fff" />
                      Delete Networks
                    </Button>
                  </TableActions>
                  <Row $head>
                    <Check />
                    <span>Name</span>
                    <RightCell>State</RightCell>
                    <span>Actions</span>
                  </Row>
                  <Row>
                    <Check />
                    <Link>provider-vlan</Link>
                    <span />
                    <Button $w={94}>Add Subnet</Button>
                  </Row>
                  <TableCount>Displaying 1 item</TableCount>
                </Main>
              </PageBody>

              <Backdrop>
                <Dialog>
                  <DialogHead>
                    <DialogTitle>Create Network</DialogTitle>
                    <Glyph name="times" size={19} color="#ccc" />
                  </DialogHead>
                  <DialogBody>
                    <Tabs>
                      <Pill $w={78}>Network</Pill>
                      <Pill $w={72}>Subnet</Pill>
                      <Pill $w={117} $active>Subnet Details</Pill>
                    </Tabs>
                    <Columns>
                      <Form>
                        <CheckLabel>
                          <Glyph name="check" size={14} color="#6f6f6f" />
                          Enable DHCP
                        </CheckLabel>
                        <Field $top={16}>
                          <FieldLabel>Allocation Pools <Glyph name="question" size={14} color="#6f6f6f" /></FieldLabel>
                          <TextBox $h={102} $gap={4}><GripDots /></TextBox>
                        </Field>
                        <Field $top={15}>
                          <FieldLabel>DNS Name Servers <Glyph name="question" size={14} color="#6f6f6f" /></FieldLabel>
                          <TextBox $h={101}><GripDots /></TextBox>
                        </Field>
                        <Field $top={16}>
                          <FieldLabel>Host Routes <Glyph name="question" size={14} color="#6f6f6f" /></FieldLabel>
                          <TextBox $h={101}><GripDots /></TextBox>
                        </Field>
                      </Form>
                      <Help>Specify additional attributes for the subnet.</Help>
                    </Columns>
                  </DialogBody>
                  <DialogFoot>
                    <Button $w={66}>Cancel</Button>
                    <Button $w={67}>« Back</Button>
                    <Button $w={64} $kind="primary">Create</Button>
                  </DialogFoot>
                </Dialog>
              </Backdrop>
            </Viewport>
            <ScrollBar>
              <ScrollEnd>
                <svg width="6" height="4" viewBox="0 0 6 4"><path d="M0 4l3-4 3 4z" fill="#aaa" /></svg>
              </ScrollEnd>
              <Thumb><Grip /><Grip /><Grip /></Thumb>
              <ScrollEnd $down>
                <svg width="6" height="4" viewBox="0 0 6 4"><path d="M0 0l3 4 3-4z" fill="#555" /></svg>
              </ScrollEnd>
            </ScrollBar>
          </PageFrame>
        </Browser>
      </Workspace>
    </Desktop>
  );
}
